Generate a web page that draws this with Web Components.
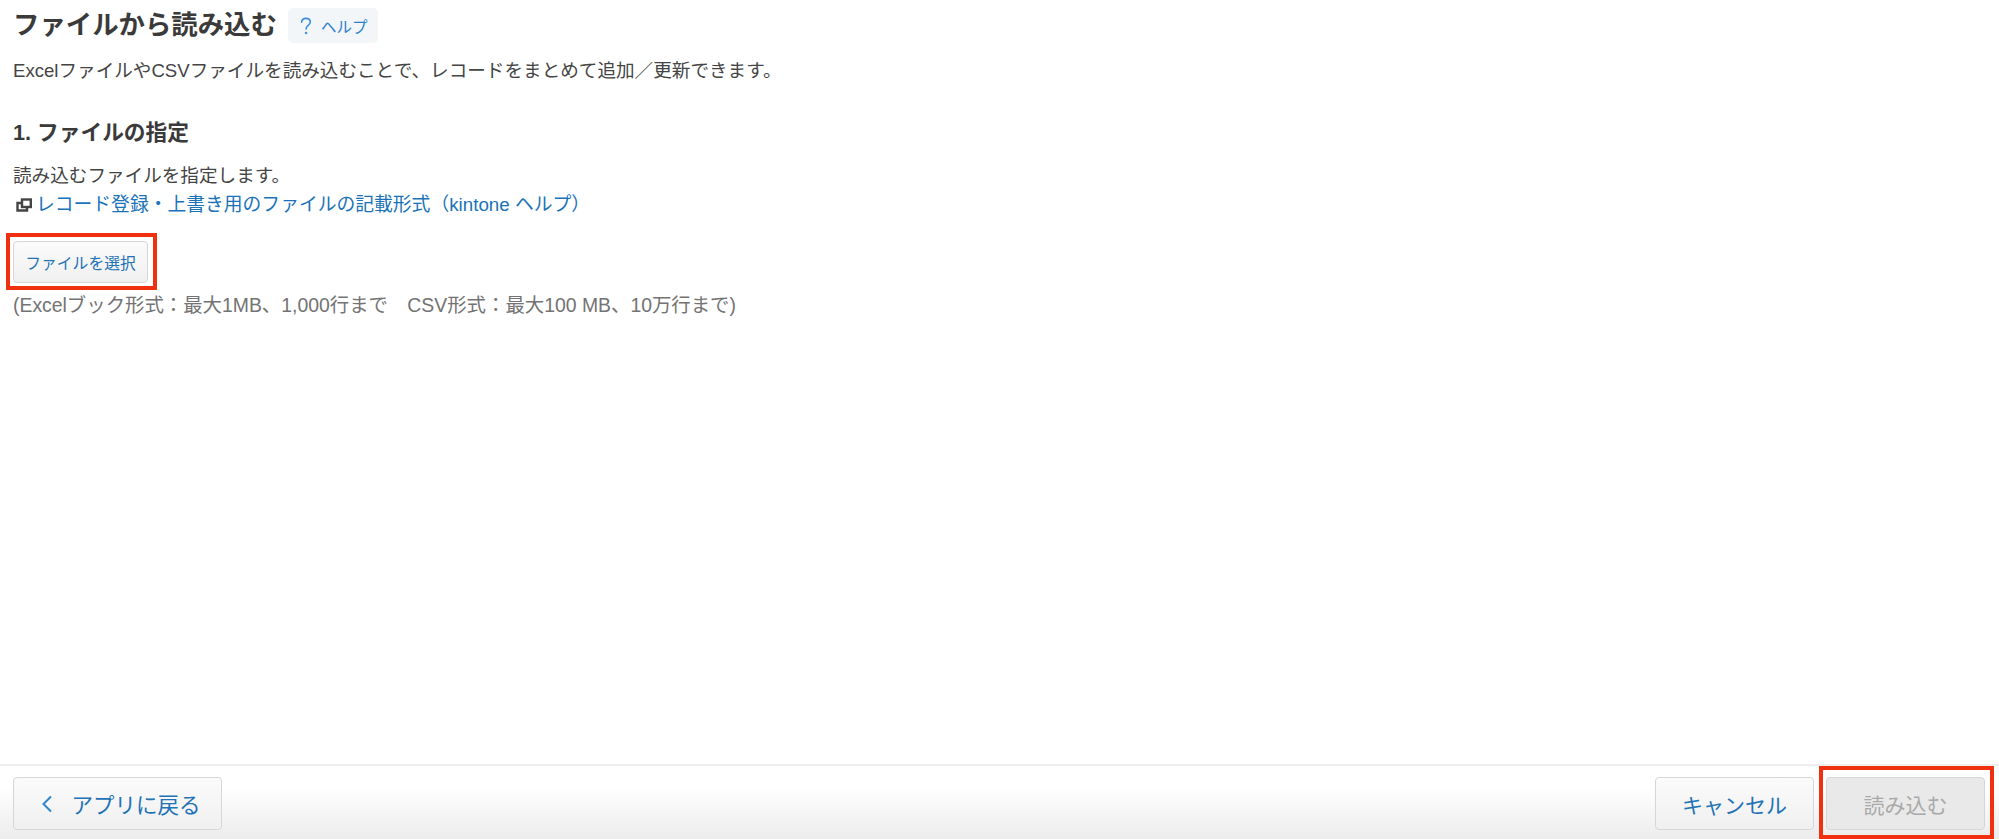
<!DOCTYPE html>
<html lang="ja">
<head>
<meta charset="utf-8">
<title>ファイルから読み込む</title>
<style>
  html, body { margin: 0; height: 100%; }
  body { font-family: "Liberation Sans", "Noto Sans CJK JP", sans-serif; color: #3a3a3a; background: #fff; }
</style>
</head>
<body>
<import-page>
  <page-header slot="top" title="ファイルから読み込む"></page-header>
  <p-line slot="top" gap="13">ExcelファイルやCSVファイルを読み込むことで、レコードをまとめて追加／更新できます。</p-line>
  <file-step slot="top"></file-step>
  <footer-bar slot="bottom"></footer-bar>
</import-page>

<script>
class ImportPage extends HTMLElement {
  constructor() {
    super();
    this.attachShadow({ mode: "open" });
    this.shadowRoot.innerHTML = `
      <style>
        :host { display: flex; flex-direction: column; height: 839px; overflow: hidden; }
        main { flex: 1; padding: 8px 13px 0; }
      </style>
      <main><slot name="top"></slot></main>
      <slot name="bottom"></slot>
    `;
  }
}
customElements.define("import-page", ImportPage);

class PageHeader extends HTMLElement {
  constructor() {
    super();
    this.attachShadow({ mode: "open" });
    this.shadowRoot.innerHTML = `
      <style>
        :host { display: flex; align-items: center; gap: 11px; height: 35px; }
        h1 { margin: 0; font-size: 26.4px; line-height: 35px; font-weight: 700; color: #3a3a3a; }
        a {
          display: flex; align-items: center; gap: 9px;
          width: 90px; height: 35px; box-sizing: border-box; padding-left: 12px;
          background: #f3f6f9; border-radius: 5px;
          color: #2b7fc9; font-size: 15.5px; text-decoration: none;
        }
        svg { width: 12px; height: 18px; flex: none; }
      </style>
      <h1></h1>
      <a href="#">
        <svg viewBox="0 0 12 18" fill="none" stroke="#3a8ee0" stroke-width="1.6" stroke-linecap="round">
          <path d="M1.6 5.2C1.8 2.8 3.6 1.4 6 1.4c2.5 0 4.3 1.5 4.3 3.7 0 1.8-1 2.7-2.3 3.6C6.800 9.500 6.100 10.400 6.100 12"/>
          <circle cx="6.100" cy="16" r=".5"/>
        </svg>
        <span>ヘルプ</span>
      </a>
    `;
  }
  connectedCallback() {
    this.shadowRoot.querySelector("h1").textContent = this.getAttribute("title");
    this.removeAttribute("title");
  }
}
customElements.define("page-header", PageHeader);

class PLine extends HTMLElement {
  constructor() {
    super();
    this.attachShadow({ mode: "open" });
    this.shadowRoot.innerHTML = `
      <style>
        :host { display: block; font-size: 18.6px; line-height: 29px; color: #444; }
      </style>
      <slot></slot>
    `;
  }
  connectedCallback() {
    this.style.marginTop = (this.getAttribute("gap") || 0) + "px";
  }
}
customElements.define("p-line", PLine);

class RedMark extends HTMLElement {
  constructor() {
    super();
    this.attachShadow({ mode: "open" });
    this.shadowRoot.innerHTML = `
      <style>
        :host { display: inline-block; position: relative; vertical-align: top; }
        i {
          position: absolute; top: var(--mark-top, -8px); left: -7px; right: -9px; bottom: var(--mark-bottom, -7px);
          border: 4px solid #f0300f; pointer-events: none;
        }
      </style>
      <slot></slot><i></i>
    `;
  }
}
customElements.define("red-mark", RedMark);

class KButton extends HTMLElement {
  constructor() {
    super();
    this.attachShadow({ mode: "open" });
    this.shadowRoot.innerHTML = `
      <style>
        :host { display: inline-block; vertical-align: top; }
        button {
          display: flex; align-items: center; justify-content: center;
          width: var(--w, 159px); height: var(--h, 53px); box-sizing: border-box; padding: 0;
          border: 1px solid #d6d6d6; border-radius: 4px;
          background: linear-gradient(#fbfbfb, #f0f0f0);
          color: #2272b6; font-family: inherit; font-size: var(--fs, 21px);
        }
        :host([disabled]) button { background: #e9e9e9; color: #a9a9a9; border-color: #d6d6d6; }
      </style>
      <button><slot></slot></button>
    `;
  }
}
customElements.define("k-button", KButton);

class FileStep extends HTMLElement {
  constructor() {
    super();
    this.attachShadow({ mode: "open" });
    this.shadowRoot.innerHTML = `
      <style>
        :host { display: block; margin-top: 34px; }
        h2 { margin: 0 0 14px; font-size: 21.7px; line-height: 28px; font-weight: 700; color: #3a3a3a; }
        .text { font-size: 18.6px; line-height: 29px; color: #444; }
        a { display: flex; align-items: center; gap: 4px; color: #1a73b8; font-size: 18.8px; text-decoration: none; }
        svg { width: 16px; height: 14px; flex: none; margin-left: 3px; }
        .pick { margin-top: 22px; height: 42px; }
        .note { margin-top: 9px; font-size: 19.4px; line-height: 26px; color: #737373; }
        k-button { --w: 135px; --h: 42px; --fs: 15.8px; }
      </style>
      <h2>1. ファイルの指定</h2>
      <div class="text">読み込むファイルを指定します。</div>
      <div class="text">
        <a href="#">
          <svg viewBox="0 0 16 14" fill="none" stroke="#444" stroke-width="2.4">
            <rect x="6" y="1.500" width="8.800" height="7.500"/>
            <path d="M6 5H1.500v7.500H11V9"/>
          </svg>
          <span>レコード登録・上書き用のファイルの記載形式（kintone ヘルプ）</span>
        </a>
      </div>
      <div class="pick"><red-mark><k-button>ファイルを選択</k-button></red-mark></div>
      <div class="note">(Excelブック形式：最大1MB、1,000行まで　CSV形式：最大100 MB、10万行まで)</div>
    `;
  }
}
customElements.define("file-step", FileStep);

class FooterBar extends HTMLElement {
  constructor() {
    super();
    this.attachShadow({ mode: "open" });
    this.shadowRoot.innerHTML = `
      <style>
        :host {
          display: flex; justify-content: space-between; align-items: flex-start;
          height: 75px; box-sizing: border-box; padding: 11px 14px 0 13px;
          border-top: 2px solid #eee;
          background: linear-gradient(#fff 30%, #ececec);
        }
        .right { display: flex; gap: 12px; }
        .back { --w: 209px; --fs: 21.5px; }
        .back span { display: flex; align-items: center; gap: 18px; padding-left: 7px; }
        svg { width: 12px; height: 18px; }
        red-mark { --mark-top: -11px; --mark-bottom: -9px; }
      </style>
      <k-button class="back">
        <span>
          <svg viewBox="0 0 12 18" fill="none" stroke="#2f84d0" stroke-width="2"><path d="M10 1.500 2.500 9l7.500 7.500"/></svg>
          アプリに戻る
        </span>
      </k-button>
      <div class="right">
        <k-button>キャンセル</k-button>
        <red-mark><k-button disabled>読み込む</k-button></red-mark>
      </div>
    `;
  }
}
customElements.define("footer-bar", FooterBar);
</script>
</body>
</html>
